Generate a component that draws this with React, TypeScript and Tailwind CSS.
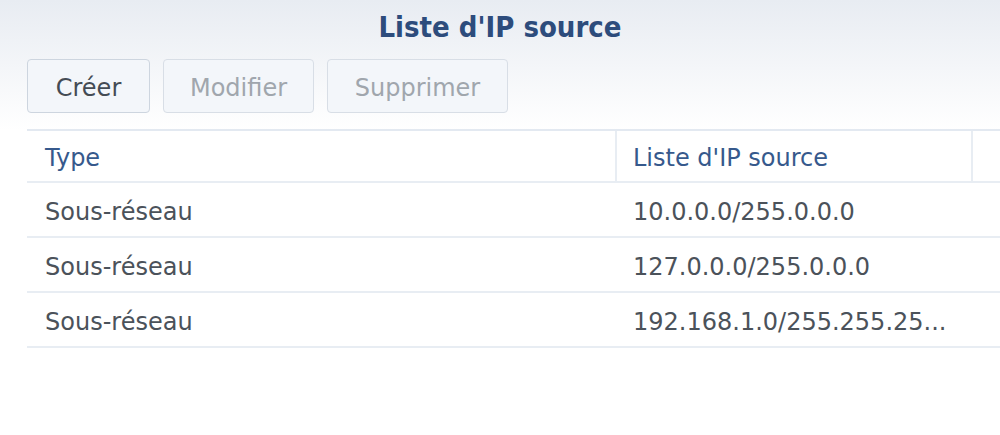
import React from "react";

const rows = [
  { type: "Sous-réseau", ip: "10.0.0.0/255.0.0.0" },
  { type: "Sous-réseau", ip: "127.0.0.0/255.0.0.0" },
  { type: "Sous-réseau", ip: "192.168.1.0/255.255.25..." },
];

export default function App() {
  return (
    <div
      className="w-[1000px] h-[435px] overflow-hidden bg-gradient-to-b from-[#e8ecf2] via-white via-[30%] to-white"
      style={{ fontFamily: '"DejaVu Sans", Verdana, sans-serif' }}
    >
      <div className="h-[52px] flex items-center justify-center pt-[2px]">
        <h1
          className="text-[29px] leading-none font-bold text-[#2d4c7c]"
          style={{ fontFamily: '"DejaVu Sans Condensed", "DejaVu Sans", sans-serif' }}
        >
          Liste d'IP source
        </h1>
      </div>
      <div className="flex gap-[13px] pl-[27px] pt-[7px]">
        <button className="w-[123px] h-[54px] pt-[4px] rounded-[4px] border border-[#cdd5df] bg-[#f3f6fa] text-[24px] text-[#444b54]">
          Créer
        </button>
        <button className="w-[151px] h-[54px] pt-[4px] rounded-[4px] border border-[#d8dee6] bg-[#f3f6fa] text-[24px] text-[#a0a6ad]">
          Modifier
        </button>
        <button className="w-[181px] h-[54px] pt-[4px] rounded-[4px] border border-[#d8dee6] bg-[#f3f6fa] text-[24px] text-[#a0a6ad]">
          Supprimer
        </button>
      </div>
      <div className="ml-[27px] mt-[16px] border-t-2 border-[#e3e9f1] bg-white">
        <div className="flex h-[52px] border-b-2 border-[#e8edf3] text-[24px] text-[#36598c]">
          <div className="w-[590px] flex items-center pl-[18px] pt-[4px] border-r-2 border-[#e8edf3]">Type</div>
          <div className="w-[356px] flex items-center pl-[16px] pt-[4px] border-r-2 border-[#e8edf3]">Liste d'IP source</div>
          <div className="flex-1" />
        </div>
        {rows.map((r, i) => (
          <div key={i} className="flex h-[55px] border-b-2 border-[#e8edf3] text-[24px] text-[#4b525a]">
            <div className="w-[590px] flex items-center pl-[18px] pt-[4px]">{r.type}</div>
            <div className="w-[356px] flex items-center pl-[16px] pt-[4px] whitespace-nowrap">{r.ip}</div>
          </div>
        ))}
      </div>
    </div>
  );
}
